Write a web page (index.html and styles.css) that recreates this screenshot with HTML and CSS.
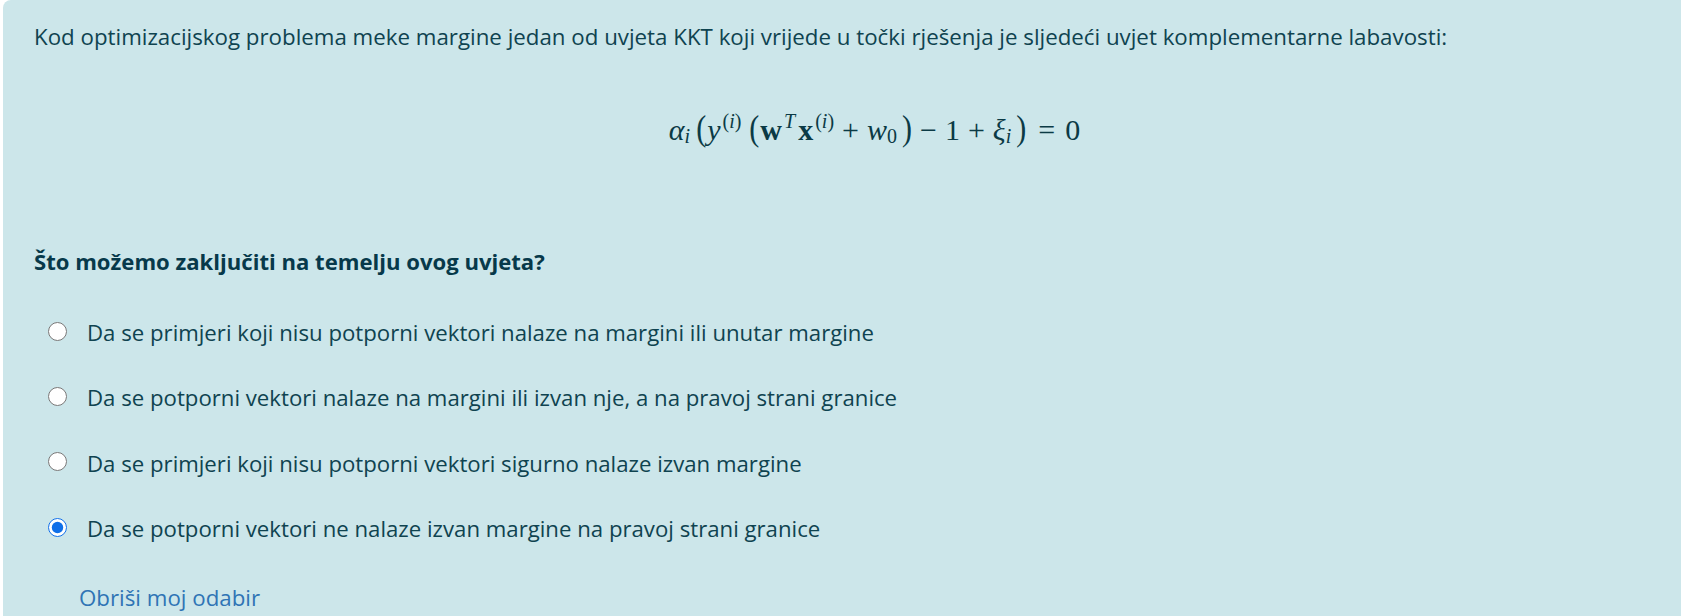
FILE: index.html
```html
<!DOCTYPE html>
<html lang="hr">
<head>
<meta charset="utf-8">
<title>Pitanje</title>
<link rel="stylesheet" href="styles.css">
</head>
<body>
<main class="panel">
  <p class="intro">Kod optimizacijskog problema meke margine jedan od uvjeta KKT koji vrijede u točki rješenja je sljedeći uvjet komplementarne labavosti:</p>
  <div class="math">
    <span class="i">α</span><sub class="i">i</sub>
    <span class="p">(</span><span class="i">y</span><sup>(<span class="i">i</span>)</sup>
    <span class="p p2">(</span><b>w</b><sup class="i">T</sup><b class="x">x</b><sup>(<span class="i">i</span>)</sup>
    <span class="op">+</span><span class="i">w</span><sub>0</sub><span class="p p3">)</span>
    <span class="op">−</span>1<span class="op">+</span><span class="i">ξ</span><sub class="i">i</sub><span class="p p3">)</span>
    <span class="op op-eq">=</span>0
  </div>
  <p class="question">Što možemo zaključiti na temelju ovog uvjeta?</p>
  <div class="answers">
    <label class="answer"><input type="radio" name="a"><span>Da se primjeri koji nisu potporni vektori nalaze na margini ili unutar margine</span></label>
    <label class="answer"><input type="radio" name="a"><span>Da se potporni vektori nalaze na margini ili izvan nje, a na pravoj strani granice</span></label>
    <label class="answer"><input type="radio" name="a"><span>Da se primjeri koji nisu potporni vektori sigurno nalaze izvan margine</span></label>
    <label class="answer"><input type="radio" name="a" checked><span>Da se potporni vektori ne nalaze izvan margine na pravoj strani granice</span></label>
  </div>
  <a class="clear" href="#">Obriši moj odabir</a>
</main>
</body>
</html>
```
FILE: styles.css
```css
html, body { margin: 0; height: 616px; overflow: hidden; background: #fff; }
body { padding-left: 3px; font-family: "Open Sans", "Noto Sans", sans-serif; }
.panel {
  height: 616px; box-sizing: border-box;
  padding: 20px 32px 0 31px;
  background: #cce6ea; color: #0f4350;
  border-radius: 8px 0 0 0;
  font-size: 22.3px; line-height: 34px;
}
.intro { margin: 0; }
.math {
  margin-top: 46px; height: 60px; display: flex; align-items: center; justify-content: center;
  padding-left: 66px;
  font-family: "Liberation Serif", serif; font-size: 30px; line-height: 1; color: #0b3a45;
}
.i { font-style: italic; }
.math sub, .math sup { font-size: 20px; line-height: 1; }
.math sub { transform: translateY(6px); }
.math sup { margin-left: 2px; transform: translateY(-9px); }
.math b { font-weight: 700; }
.x { margin-left: 3px; }
.p { font-size: 30px; font-weight: 400; margin: 0 1px 0 6px; transform: scaleY(1.2) translateY(-2px); }
.p2 { margin-left: 8px; }
.p3 { margin: 0 0 0 5px; }
.op { margin: 0 8px; }
.op-eq { margin: 0 10px 0 12px; }
.question { margin: 84px 0 0; font-size: 22.1px; font-weight: 700; color: #07394a; }
.answers { margin-top: 38px; display: flex; flex-direction: column; gap: 31.4px; font-size: 22.2px; }
.answer { display: flex; align-items: center; gap: 20px; padding-left: 14px; height: 34px; }
.answer input { margin: 0 0 4px; width: 19px; height: 19px; accent-color: #0f6fe8; }
.clear { display: block; margin: 35px 0 0 45px; color: #2f74b5; text-decoration: none; }
```
